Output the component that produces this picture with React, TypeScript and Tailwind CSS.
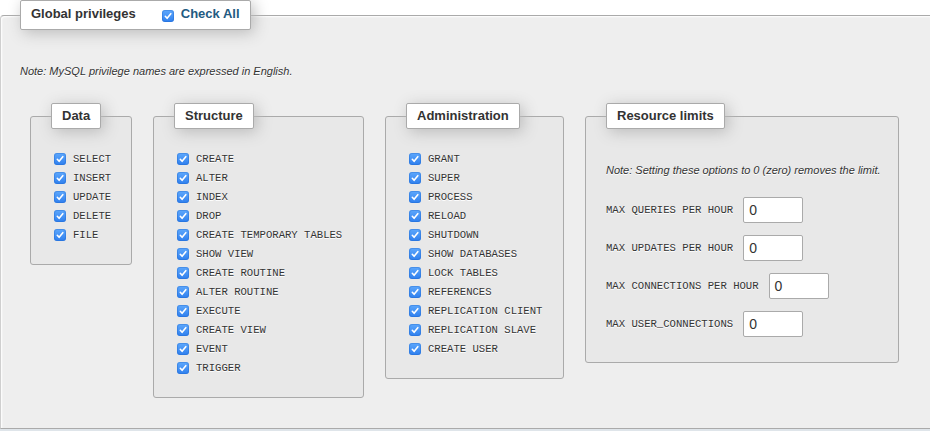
import React from "react";

const dataPrivs = ["SELECT", "INSERT", "UPDATE", "DELETE", "FILE"];
const structurePrivs = [
  "CREATE",
  "ALTER",
  "INDEX",
  "DROP",
  "CREATE TEMPORARY TABLES",
  "SHOW VIEW",
  "CREATE ROUTINE",
  "ALTER ROUTINE",
  "EXECUTE",
  "CREATE VIEW",
  "EVENT",
  "TRIGGER",
];
const adminPrivs = [
  "GRANT",
  "SUPER",
  "PROCESS",
  "RELOAD",
  "SHUTDOWN",
  "SHOW DATABASES",
  "LOCK TABLES",
  "REFERENCES",
  "REPLICATION CLIENT",
  "REPLICATION SLAVE",
  "CREATE USER",
];
const limits = [
  "MAX QUERIES PER HOUR",
  "MAX UPDATES PER HOUR",
  "MAX CONNECTIONS PER HOUR",
  "MAX USER_CONNECTIONS",
];

function Check({ className = "" }: { className?: string }) {
  return (
    <span
      className={
        "inline-flex w-[12px] h-[12px] shrink-0 items-center justify-center rounded-[3px] bg-linear-to-b from-[#5ea8fc] to-[#2e7fee] shadow-[inset_0_0_0_1px_rgba(30,100,200,0.35)] " +
        className
      }
    >
      <svg viewBox="0 0 12 12" width="12" height="12">
        <path
          d="M3.3 6.3 L5.1 8.3 L8.8 3.7"
          fill="none"
          stroke="#fff"
          strokeWidth="1.6"
          strokeLinecap="round"
          strokeLinejoin="round"
        />
      </svg>
    </span>
  );
}

function InnerLegend({ children }: { children: React.ReactNode }) {
  return (
    <legend className="ml-[20px] border border-[#aaa] rounded-[2px] bg-white px-[10px] pt-[3px] pb-[3px] text-[13px] leading-[18px] font-bold text-[#333] shadow-[3px_3px_15px_#bbb]">
      {children}
    </legend>
  );
}

function PrivBox({
  title,
  items,
  width,
}: {
  title: string;
  items: string[];
  width: string;
}) {
  return (
    <fieldset
      className={
        "m-0 p-0 shrink-0 border border-[#aaa] rounded-[3px] bg-[#e8e8e8] " + width
      }
    >
      <InnerLegend>{title}</InnerLegend>
      <div className="pl-[23px] pt-[20px] pb-[20px]">
        {items.map((p) => (
          <div key={p} className="flex h-[19px] items-center">
            <Check className="mr-[7px]" />
            <span className="whitespace-pre font-['Liberation_Mono',monospace] text-[10.6px] leading-[12px] text-[#333]">
              {p}
            </span>
          </div>
        ))}
      </div>
    </fieldset>
  );
}

export default function App() {
  return (
    <div className="w-[930px] h-[431px] overflow-hidden bg-white font-['Liberation_Sans',Arial,sans-serif] text-[#333] [text-shadow:0_1px_0_#fff]">
      <fieldset className="m-0 p-0 border border-[#aaa] border-r-0 border-l-[#cfcfcf] rounded-tl-[4px] bg-[#eee] shadow-[inset_1px_1px_2px_#fff]">
        <legend className="ml-[19px] border border-[#aaa] rounded-[2px] bg-white px-[10px] pt-[4px] pb-[6px] text-[13px] leading-[18px] font-bold text-[#333] shadow-[3px_3px_15px_#bbb]">
          <span className="flex items-center">
            <span>Global privileges</span>
            <Check className="ml-[26px] mr-[7px] mt-[3px]" />
            <span className="text-[#235a81]">Check All</span>
          </span>
        </legend>
        <div className="pt-[35px] pb-[30px]">
          <div className="ml-[19px] text-[11px] leading-[13px] italic text-[#333]">
            Note: MySQL privilege names are expressed in English.
          </div>
          <div className="mt-[25px] ml-[29px] flex items-start gap-[21px]">
            <PrivBox title="Data" items={dataPrivs} width="w-[102px]" />
            <PrivBox title="Structure" items={structurePrivs} width="w-[211px]" />
            <PrivBox title="Administration" items={adminPrivs} width="w-[179px]" />
            <fieldset className="m-0 p-0 shrink-0 w-[314px] border border-[#aaa] rounded-[3px] bg-[#e8e8e8]">
              <InnerLegend>Resource limits</InnerLegend>
              <div className="pl-[20px] pt-[35px] pb-[25px]">
                <div className="text-[11px] leading-[13px] italic text-[#333]">
                  Note: Setting these options to 0 (zero) removes the limit.
                </div>
                <div className="mt-[20px] flex flex-col gap-[12px]">
                  {limits.map((l) => (
                    <div key={l} className="flex h-[26px] items-center">
                      <span className="whitespace-pre font-['Liberation_Mono',monospace] text-[10.6px] leading-[12px] text-[#333]">
                        {l}
                      </span>
                      <div className="ml-[10px] flex h-[26px] w-[60px] items-center rounded-[2px] border border-[#aaa] bg-white pl-[5px] text-[14px] text-[#333] [text-shadow:none]">
                        0
                      </div>
                    </div>
                  ))}
                </div>
              </div>
            </fieldset>
          </div>
        </div>
      </fieldset>
      <div className="h-[2px] bg-[#dfe5ea]" />
    </div>
  );
}
